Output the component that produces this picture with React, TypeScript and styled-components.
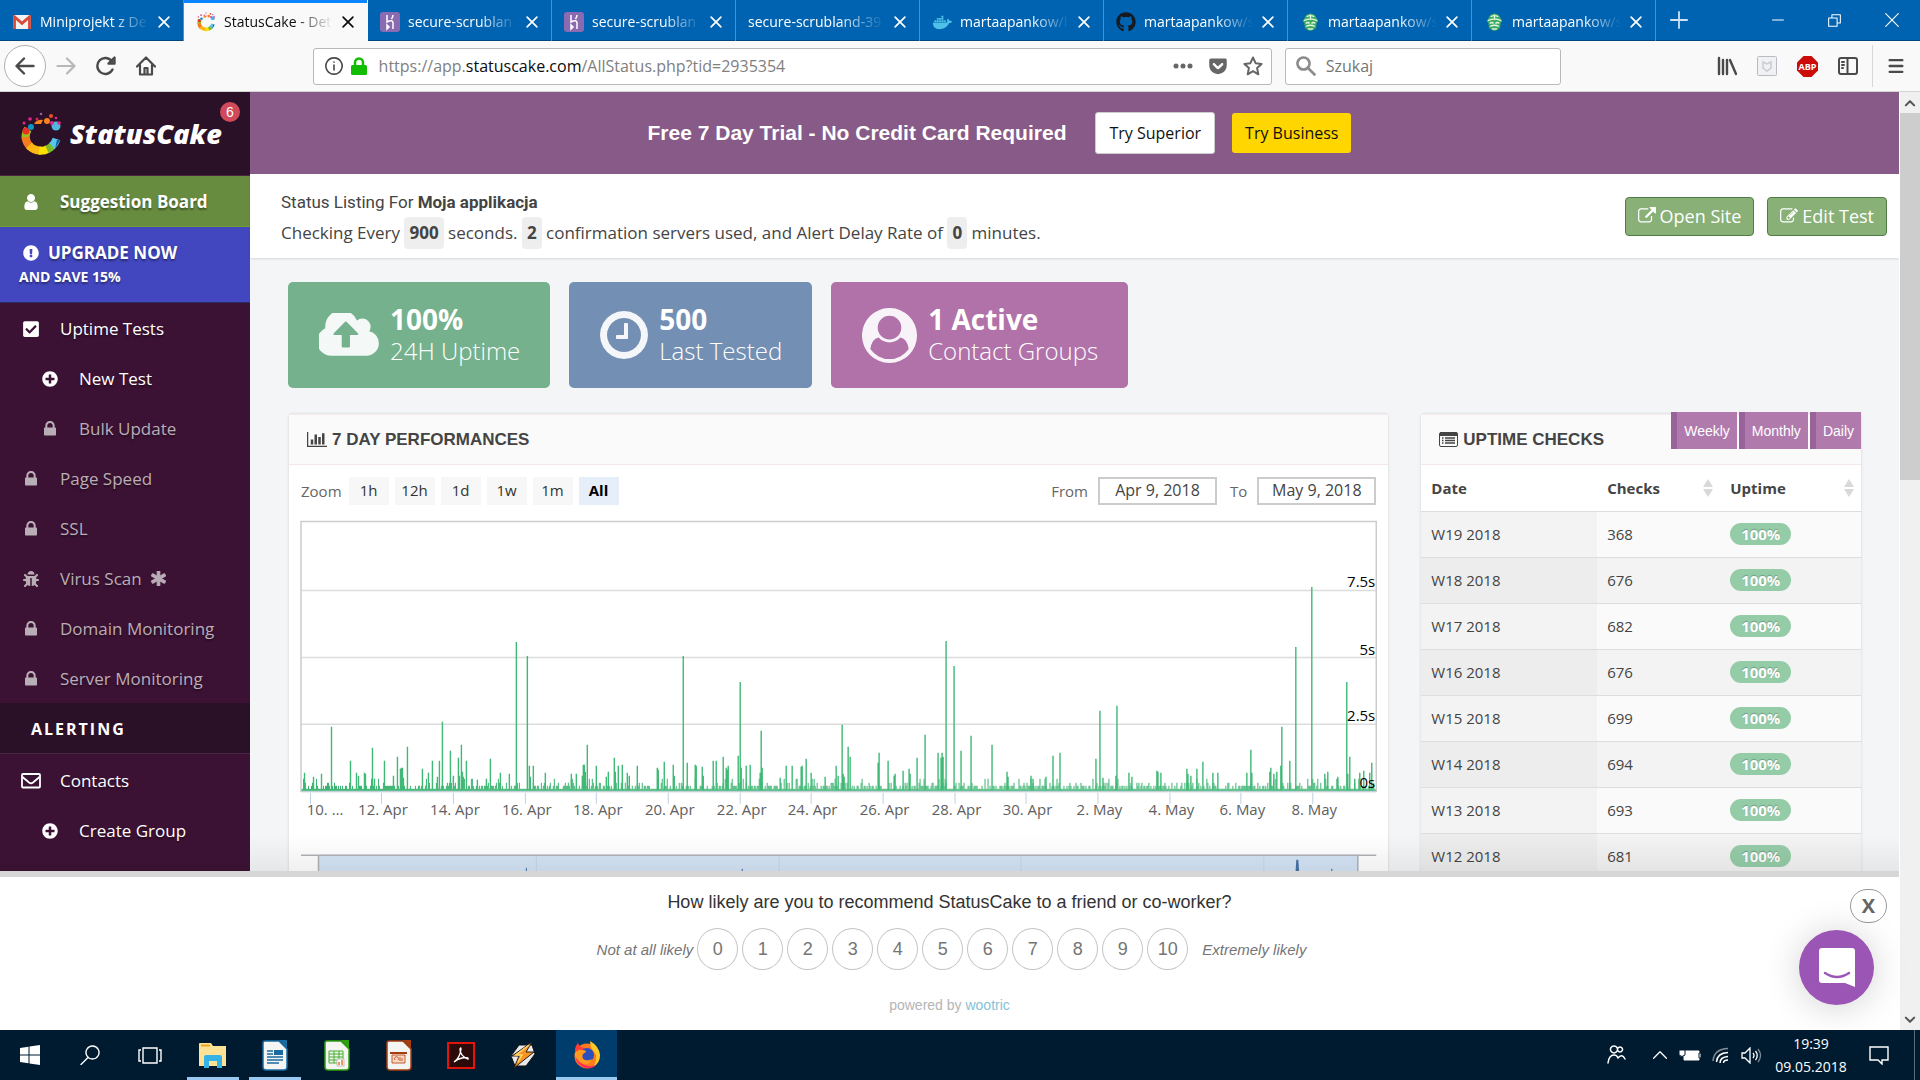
import React from "react";
import styled, { createGlobalStyle, css } from "styled-components";
import {
  FaAsterisk,
  FaBug,
  FaCheckSquare,
  FaDocker,
  FaExclamationCircle,
  FaGetPocket,
  FaGithub,
  FaPlusCircle,
} from "react-icons/fa";

const sans = `"Open Sans", "Noto Sans", sans-serif`;
const arial = `"Liberation Sans", Arial, sans-serif`;

const GlobalStyle = createGlobalStyle`
  * { box-sizing: border-box; }
  body { margin: 0; font-family: ${sans}; font-size: 16px; color: #444; background: #fff; }
  button, input { font: inherit; color: inherit; margin: 0; }
  button { cursor: pointer; background: none; border: 0; padding: 0; }
  a { color: inherit; text-decoration: none; }
  svg { display: block; flex: none; }
`;

/* ---------- shell ---------- */

const Screen = styled.div`
  display: flex;
  flex-direction: column;
  height: 100vh;
  overflow: hidden;
`;

const Viewport = styled.div`
  display: flex;
  flex: 1;
  min-height: 0;
`;

const Site = styled.div`
  display: flex;
  flex-direction: column;
  flex: 1;
  min-width: 0;
`;

const SiteBody = styled.div`
  position: relative;
  display: flex;
  flex: 1;
  min-height: 0;
  overflow: hidden;
  background: #f4f5f7;

  &::after {
    content: "";
    position: absolute;
    left: 0;
    right: 0;
    bottom: 0;
    height: 36px;
    background: linear-gradient(rgba(0, 0, 0, 0), rgba(0, 0, 0, 0.06));
    pointer-events: none;
  }
`;

/* ---------- browser tabs ---------- */

const TabStrip = styled.div`
  display: flex;
  height: 41px;
  background: #0063b1;
  border-bottom: 1px solid #004680;
`;

const TabBox = styled.div<{ $active?: boolean }>`
  display: flex;
  align-items: center;
  flex: 0 1 184px;
  min-width: 0;
  height: 41px;
  padding: 3px 12px 0;
  gap: 8px;
  color: #fff;
  border-right: 1px solid #4b92ca;
  ${(p) =>
    p.$active &&
    css`
      background: #f9f9fa;
      color: #0c0c0d;
      border-right-color: #f9f9fa;
      box-shadow: inset 0 3px #0a84ff;
    `}
`;

const Favicon = styled.span`
  display: flex;
  flex: none;
  justify-content: center;
  width: 20px;
`;

const TabTitle = styled.button`
  flex: 1;
  min-width: 0;
  white-space: nowrap;
  text-align: left;
  font-size: 14px;
  line-height: 20px;
  mask-image: linear-gradient(to right, #000 65%, transparent 100%);
`;

const IconButton = styled.button`
  display: flex;
  align-items: center;
  justify-content: center;
`;

const WindowButtons = styled.div`
  display: flex;
  margin-left: auto;
  color: #fff;
`;

const WindowButton = styled(IconButton)`
  width: 57px;
  height: 40px;
`;

const NewTab = styled(IconButton)`
  width: 45px;
  color: #cfe3f4;
`;

const Toolbar = styled.div`
  display: flex;
  align-items: center;
  height: 51px;
  padding: 0 15px 0 4px;
  background: #f9f9fa;
  border-bottom: 1px solid #d5d5d6;
  color: #4a4a4b;
`;

const NavButtons = styled.div`
  display: flex;
  align-items: center;
`;

const NavButton = styled(IconButton)<{ $faded?: boolean }>`
  width: 40px;
  height: 42px;
  color: ${(p) => (p.$faded ? "#b8b8b9" : "#4a4a4b")};
`;

const BackButton = styled(IconButton)`
  width: 42px;
  height: 42px;
  border: 1px solid #b1b1b3;
  border-radius: 50%;
  background: #fff;
`;

const Spring = styled.div<{ $grow: number }>`
  flex: ${(p) => p.$grow};
`;

const FieldBox = styled.div`
  display: flex;
  align-items: center;
  gap: 8px;
  height: 37px;
  padding: 0 8px 0 11px;
  background: #fff;
  border: 1px solid #b9b9ba;
  border-radius: 3px;
`;

const UrlBox = styled(FieldBox)`
  flex: 96;
  min-width: 0;
`;

const UrlText = styled.div`
  flex: 1;
  min-width: 0;
  margin-left: 4px;
  overflow: hidden;
  white-space: nowrap;
  font-size: 16px;
  color: #808081;
  outline: 0;

  b {
    font-weight: 400;
    color: #0c0c0d;
  }
`;

const UrlActions = styled.div`
  display: flex;
  align-items: center;
  gap: 15px;
  color: #666;
`;

const SearchBox = styled.label`
  display: flex;
  align-items: center;
  gap: 8px;
  width: 276px;
  height: 37px;
  margin-left: 13px;
  padding: 0 10px;
  background: #fff;
  border: 1px solid #b9b9ba;
  border-radius: 3px;
  color: #8c8c8c;
`;

const SearchInput = styled.input`
  flex: 1;
  min-width: 0;
  border: 0;
  outline: 0;
  background: none;
  font-size: 16px;

  &::placeholder {
    color: #757575;
    opacity: 1;
  }
`;

const Extensions = styled.div`
  display: flex;
  align-items: center;
  gap: 20px;
`;

const MenuDivider = styled.div`
  width: 1px;
  height: 42px;
  margin: 0 -6px;
  background: #d7d7d8;
`;

/* ---------- page scrollbar ---------- */

const Scroll = styled.div`
  display: flex;
  flex-direction: column;
  align-items: center;
  justify-content: space-between;
  width: 21px;
  background: #f0f0f0;
  border-left: 1px solid #fff;
  color: #555;
`;

const ScrollArrow = styled(IconButton)`
  width: 20px;
  height: 21px;
`;

const ScrollTrack = styled.div`
  flex: 1;
  width: 20px;
`;

const ScrollThumb = styled.div`
  height: 41%;
  background: #cdcdcd;
`;

/* ---------- sidebar ---------- */

const Sidebar = styled.nav`
  flex: 0 0 250px;
  display: flex;
  flex-direction: column;
  background: #3c1234;
  color: #fff;
`;

const Brand = styled.a`
  position: relative;
  display: flex;
  align-items: center;
  flex: none;
  gap: 9px;
  height: 84px;
  padding-left: 21px;
  background: #2b1127;
  border-bottom: 1px solid #4a2644;
`;

const BrandName = styled.span`
  font-size: 27px;
  font-style: italic;
  font-weight: 800;
  line-height: 36px;
`;

const Badge = styled.span`
  position: absolute;
  top: 10px;
  right: 10px;
  width: 20px;
  height: 20px;
  border-radius: 50%;
  background: #d04a5b;
  font-family: ${arial};
  font-size: 14px;
  line-height: 20px;
  text-align: center;
`;

const SideLink = styled.a<{ $sub?: boolean; $muted?: boolean; $green?: boolean }>`
  display: flex;
  align-items: center;
  flex: none;
  height: 50px;
  padding-top: 1px;
  padding-left: ${(p) => (p.$sub ? 37 : 18)}px;
  font-size: 17px;
  color: ${(p) => (p.$muted ? "#b9adb6" : "#fff")};
  text-shadow: 0 2px 2px rgba(0, 0, 0, 0.4);
  ${(p) =>
    p.$green &&
    css`
      height: 51px;
      background: #688c3f;
      border-bottom: 1px solid #6fa035;
      font-weight: 700;
    `}
`;

const SideIcon = styled.span`
  display: flex;
  justify-content: center;
  width: 26px;
  margin-right: 16px;
`;

const SideMark = styled.span`
  margin-left: 9px;

  svg {
    stroke: currentColor;
    stroke-width: 40px;
  }
`;

const Upgrade = styled.a`
  flex: none;
  height: 76px;
  padding: 14px 19px 0;
  background: #4347bf;
  border-bottom: 1px solid #2c2b63;
  font-weight: 700;
  text-shadow: 0 2px 2px rgba(0, 0, 0, 0.4);
`;

const UpgradeTop = styled.span`
  display: flex;
  align-items: center;
  gap: 9px;
  padding-left: 4px;
  font-size: 17px;
  line-height: 24px;
`;

const UpgradeNote = styled.span`
  display: block;
  font-size: 14px;
  line-height: 23px;
`;

const SideHeading = styled.h2`
  flex: none;
  margin: 0 0 1px;
  padding-left: 31px;
  height: 51px;
  background: #2b1127;
  border-bottom: 1px solid #4a2644;
  font-size: 16px;
  font-weight: 700;
  line-height: 52px;
  letter-spacing: 2px;
`;

/* ---------- main column ---------- */

const Main = styled.main`
  flex: 1;
  min-width: 0;
`;

const Trial = styled.div`
  display: flex;
  align-items: center;
  justify-content: center;
  height: 82px;
  padding-right: 150px;
  background: #875a87;
`;

const TrialText = styled.strong`
  margin-right: 29px;
  font-family: ${arial};
  font-size: 21px;
  color: #fff;
`;

const TrialButton = styled.button<{ $gold?: boolean }>`
  height: ${(p) => (p.$gold ? 40 : 42)}px;
  margin-right: ${(p) => (p.$gold ? 0 : 17)}px;
  padding: 0 13px;
  border: ${(p) => (p.$gold ? "0" : "1px solid #ccc")};
  border-radius: 3px;
  background: ${(p) => (p.$gold ? "#ffd600" : "#fff")};
  color: #111;
  font-size: 16px;
`;

const PageHead = styled.header`
  display: flex;
  justify-content: space-between;
  height: 84px;
  padding: 16px 12px 0 31px;
  background: #fff;
  box-shadow: 0 1px 2px rgba(0, 0, 0, 0.12);
`;

const PageTitle = styled.h1`
  margin: 0 0 3px;
  font-family: Roboto, ${sans};
  font-size: 17px;
  font-weight: 400;
  line-height: 24px;
`;

const Summary = styled.p`
  margin: 0;
  font-size: 17px;
  line-height: 32px;

  b {
    display: inline-block;
    padding: 0 5px;
    border-radius: 4px;
    background: #eee;
  }
`;

const HeadActions = styled.div`
  display: flex;
  gap: 13px;
  padding-top: 7px;
`;

const GreenButton = styled.a`
  display: flex;
  align-items: center;
  gap: 4px;
  height: 39px;
  padding: 0 12px 1px;
  border: 1px solid #4f7d43;
  border-radius: 4px;
  background: #88b077;
  color: #fff;
  font-size: 18px;
`;

const Content = styled.div`
  padding: 24px 38px 0 39px;
`;

const Stats = styled.div`
  display: flex;
  gap: 19px;
  margin: 0 0 26px -1px;
`;

const Stat = styled.a<{ $color: string }>`
  display: flex;
  align-items: center;
  gap: 11px;
  height: 106px;
  padding: 0 30px 0 31px;
  border-radius: 5px;
  background: ${(p) => p.$color};
  color: #fff;

  svg {
    opacity: 0.92;
  }
`;

const StatValue = styled.strong`
  display: block;
  font-size: 28px;
  line-height: 32px;
`;

const StatLabel = styled.span`
  display: block;
  font-size: 24px;
  font-weight: 300;
  line-height: 32px;
`;

const Panels = styled.div`
  display: grid;
  grid-template-columns: minmax(0, 5fr) minmax(0, 2fr);
  gap: 33px;
`;

const Panel = styled.section`
  background: #fff;
  border-radius: 3px;
  box-shadow: 0 0 3px rgba(0, 0, 0, 0.15);
`;

const PanelHead = styled.div`
  position: relative;
  display: flex;
  align-items: center;
  gap: 5px;
  height: 51px;
  padding: 0 18px;
  background: #fafafa;
  border-top: 1px solid #f8eaea;
  border-bottom: 1px solid #f5e6e8;
`;

const PanelTitle = styled.h2`
  margin: 0;
  font-family: ${arial};
  font-size: 17px;
  font-weight: 700;
`;

const Periods = styled.div`
  position: absolute;
  top: -3px;
  right: 0;
  display: flex;
  gap: 2px;
`;

const Period = styled.button`
  height: 37px;
  padding: 0 7px;
  border-left: 6px solid #98639a;
  background: #b07aad;
  color: #fff;
  font-family: ${arial};
  font-size: 14px;
`;

const ChartBody = styled.div`
  padding: 12px 11px 0;
`;

const RangeRow = styled.div`
  display: flex;
  align-items: center;
  height: 28px;
  margin-bottom: 15px;
  padding: 0 1px;
  font-size: 15px;
  color: #666;
`;

const RangeButtons = styled.div`
  display: flex;
  gap: 6px;
  margin-left: 7px;
  margin-right: auto;
`;

const RangeButton = styled.button<{ $on?: boolean }>`
  width: 40px;
  height: 28px;
  padding-bottom: 2px;
  background: ${(p) => (p.$on ? "#e6eef9" : "#f7f7f7")};
  color: ${(p) => (p.$on ? "#000" : "#333")};
  font-weight: ${(p) => (p.$on ? 700 : 400)};
  font-size: 15px;
`;

const DateField = styled.label`
  display: flex;
  align-items: center;
  gap: 10px;
  margin-left: 13px;
`;

const DateInput = styled.input`
  width: 119px;
  height: 28px;
  padding: 0 0 2px;
  border: 2px solid #ccc;
  background: #fff;
  color: #444;
  text-align: center;
  font-size: 16px;
`;

const ChartSvg = styled.svg`
  width: 100%;
  height: auto;
  font-family: ${sans};
  font-size: 15px;
`;

/* ---------- checks table ---------- */

const ChecksTable = styled.table`
  width: 100%;
  border-collapse: collapse;
  table-layout: fixed;
  font-size: 15px;

  th,
  td {
    height: 46px;
    padding: 0 10px;
    text-align: left;
    border-bottom: 1px solid #ddd;
  }

  th:first-child { width: 40%; }
  th:nth-child(2) { width: 28%; }

  tbody tr { background: #fafafa; }
  tbody td:first-child { background: #f3f3f3; }
  tbody tr:nth-child(even) { background: #f3f3f3; }
  tbody tr:nth-child(even) td:first-child { background: #ededed; }
`;

const SortHead = styled.span`
  display: flex;
  align-items: center;
  justify-content: space-between;
  margin-right: -3px;
`;

const Pill = styled.span`
  display: block;
  width: 61px;
  height: 22px;
  border-radius: 11px;
  background: #95cca8;
  color: #fff;
  font-size: 15px;
  font-weight: 700;
  line-height: 22px;
  text-align: center;
  text-shadow: 0 -1px 1px rgba(0, 0, 0, 0.25);
`;

/* ---------- survey ---------- */

const Survey = styled.aside`
  position: relative;
  flex: none;
  display: flex;
  flex-direction: column;
  align-items: center;
  height: 159px;
  padding-top: 14px;
  border-top: 6px solid #d6d6d6;
  background: #fff;
  font-family: ${arial};
`;

const Question = styled.p`
  margin: 0 0 15px;
  font-size: 18px;
  line-height: 22px;
  color: #333;
`;

const Scores = styled.div`
  display: flex;
  align-items: center;
  gap: 4px;
  padding-left: 4px;
  font-size: 15px;
  font-style: italic;
  color: #757575;
`;

const ScoreEnd = styled.span`
  margin-left: 10px;
`;

const Score = styled.button`
  width: 41px;
  height: 42px;
  border: 1px solid #c4c4c4;
  border-radius: 50%;
  background: #fff;
  font-size: 18px;
  font-style: normal;
`;

const Powered = styled.p`
  margin: 26px 0 0;
  font-size: 14px;
  line-height: 18px;
  color: #b5b5b5;

  a {
    color: #86c2d6;
  }
`;

const CloseSurvey = styled.button`
  position: absolute;
  top: 12px;
  right: 12px;
  width: 37px;
  height: 34px;
  border: 1px solid #999;
  border-radius: 17px;
  background: #fff;
  color: #666;
  font-family: ${sans};
  font-size: 20px;
  font-weight: 700;
  line-height: 26px;
`;

const ChatButton = styled(IconButton)`
  position: absolute;
  right: 25px;
  bottom: 25px;
  width: 75px;
  height: 75px;
  border-radius: 50%;
  background: #9b55b5;
  box-shadow: 0 2px 36px rgba(0, 0, 0, 0.18);
`;

/* ---------- taskbar ---------- */

const TaskBar = styled.footer`
  display: flex;
  flex: none;
  height: 50px;
  background: #001b30;
  color: #fff;
`;

const TaskButton = styled(IconButton)<{ $open?: boolean; $active?: boolean }>`
  width: ${(p) => (p.$active ? 61 : 52)}px;
  background: ${(p) => (p.$active ? "#003d6d" : "none")};
  box-shadow: ${(p) => (p.$open || p.$active ? "inset 0 -3px #99c8f0" : "none")};
`;

const TaskStart = styled.div`
  display: flex;
  gap: 8px;
  padding: 0 11px 0 4px;
`;

const TaskApps = styled.div`
  display: flex;
  gap: 10px;
  margin-right: 7px;
`;

const Tray = styled.div`
  display: flex;
  align-items: center;
  margin-left: auto;
`;

const TrayIcons = styled.div`
  display: flex;
  align-items: center;
  gap: 11px;
`;

const People = styled.span`
  margin-right: 15px;
`;

const Clock = styled.time`
  width: 98px;
  margin-right: 9px;
  font-size: 14px;
  line-height: 23px;
  text-align: center;
`;

const ShowDesktop = styled.button`
  width: 6px;
  height: 50px;
  margin-left: 25px;
  border-left: 1px solid #5b6b78;
`;

/* ---------- icons ---------- */

type GlyphProps = { d: string; box?: string; w: number; h: number };
const Glyph = ({ d, box = "0 0 1792 1792", w, h }: GlyphProps) => (
  <svg width={w} height={h} viewBox={box} fill="currentColor" aria-hidden="true">
    <path d={d} />
  </svg>
);

type LineProps = { d: string; size?: number; w?: number; fill?: string };
const Line = ({ d, size = 20, w = 2, fill = "none" }: LineProps) => (
  <svg width={size} height={size} viewBox="0 0 20 20" fill={fill} stroke="currentColor" strokeWidth={w} strokeLinejoin="round" strokeLinecap="round" aria-hidden="true">
    <path d={d} />
  </svg>
);

const PERSON =
  "M1280 1399q0 109-62.5 187t-150.5 78h-854q-88 0-150.5-78t-62.5-187q0-85 8.5-160.5t31.5-152 58.5-131 94-89 134.5-34.5q131 128 313 128t313-128q76 0 134.5 34.5t94 89 58.5 131 31.5 152 8.5 160.5zm-256-887q0 159-112.5 271.5t-271.5 112.5-271.5-112.5-112.5-271.5 112.5-271.5 271.5-112.5 271.5 112.5 112.5 271.5z";
const PERSON_DISC =
  "M1523 1339q-22-155-87.500-257.500t-184.500-118.500q-67 74-159.500 115.500t-195.500 41.500-195.500-41.500-159.500-115.500q-119 16-184.500 118.500t-87.500 257.500q106 150 271 237.500t356 87.500 356-87.500 271-237.500zm-243-699q0-159-112.500-271.500t-271.500-112.500-271.500 112.500-112.500 271.500 112.500 271.500 271.500 112.500 271.500-112.500 112.500-271.500zm512 256q0 182-71 347.500t-190.500 286-285.500 191.500-349 71-348.500-71-286-191-191-286-71-348.500 71-348 191-286 286-191 348-71 348 71 286 191 191 286 71 348z";
const LOCK =
  "M320 768h512v-192q0-106-75-181t-181-75-181 75-75 181v192zm832 96v576q0 40-28 68t-68 28h-960q-40 0-68-28t-28-68v-576q0-40 28-68t68-28h32v-192q0-184 132-316t316-132 316 132 132 316v192h32q40 0 68 28t28 68z";
const CLOUD =
  "M1216 864q0-14-9-23l-352-352q-9-9-23-9t-23 9l-351 351q-10 12-10 24 0 14 9 23t23 9h224v352q0 13 9.5 22.5t22.5 9.5h192q13 0 22.5-9.5t9.5-22.5v-352h224q13 0 22.5-9.5t9.5-22.5zm640 288q0 159-112.5 271.5t-271.5 112.5h-1088q-185 0-316.5-131.5t-131.5-316.5q0-130 70-240t188-165q-2-30-2-43 0-212 150-362t362-150q156 0 285.5 87t188.5 231q71-62 166-62 106 0 181 75t75 181q0 76-41 138 130 31 213.5 135.5t83.5 238.5z";
const CLOCK =
  "M1024 544v448q0 14-9 23t-23 9h-320q-14 0-23-9t-9-23v-64q0-14 9-23t23-9h224v-352q0-14 9-23t23-9h64q14 0 23 9t9 23zm416 352q0-148-73-273t-198-198-273-73-273 73-198 198-73 273 73 273 198 198 273 73 273-73 198-198 73-273zm224 0q0 209-103 385.5t-279.5 279.5-385.5 103-385.5-103-279.5-279.5-103-385.5 103-385.5 279.5-279.5 385.5-103 385.5 103 279.5 279.5 103 385.5z";
const BARS =
  "M640 896v512h-256v-512h256zm384-512v1024h-256v-1024h256zm1024 1152v128h-2048v-1536h128v1408h1920zm-640-896v768h-256v-768h256zm384-384v1152h-256v-1152h256z";
const EXTERNAL =
  "M1408 928v320q0 119-84.5 203.5t-203.5 84.5h-832q-119 0-203.5-84.5t-84.5-203.5v-832q0-119 84.5-203.5t203.5-84.5h704q14 0 23 9t9 23v64q0 14-9 23t-23 9h-704q-66 0-113 47t-47 113v832q0 66 47 113t113 47h832q66 0 113-47t47-113v-320q0-14 9-23t23-9h64q14 0 23 9t9 23zm384-864v512q0 26-19 45t-45 19-45-19l-176-176-652 652q-10 10-23 10t-23-10l-114-114q-10-10-10-23t10-23l652-652-176-176q-19-19-19-45t19-45 45-19h512q26 0 45 19t19 45z";
const EDIT =
  "M888 1184l116-116-152-152-116 116v56h96v96h56zm440-720q-16-16-33 1l-350 350q-17 17-1 33t33-1l350-350q17-17 1-33zm80 594v190q0 119-84.5 203.5t-203.5 84.5h-832q-119 0-203.5-84.5t-84.5-203.5v-832q0-119 84.5-203.5t203.5-84.5h832q63 0 117 25 15 7 18 23 3 17-9 29l-49 49q-14 14-32 8-23-6-45-6h-832q-66 0-113 47t-47 113v832q0 66 47 113t113 47h832q66 0 113-47t47-113v-126q0-13 9-22l64-64q15-15 35-7t20 29zm-96-738l288 288-672 672h-288v-288zm444 132l-92 92-288-288 92-92q28-28 68-28t68 28l152 152q28 28 28 68t-28 68z";

const LockIcon = () => <Glyph d={LOCK} box="0 160 1152 1400" w={12} h={15} />;

const MailIcon = () => (
  <svg width="20" height="16" viewBox="0 0 20 16" fill="none" stroke="currentColor" strokeWidth="1.800" aria-hidden="true">
    <rect x="1" y="1" width="18" height="13.500" rx="1" />
    <path d="M1.500 4l6.500 5.500q2 1.500 4 0L18.500 4" />
  </svg>
);

const ListIcon = () => (
  <svg width="19" height="15" viewBox="0 0 19 15" aria-hidden="true">
    <rect x=".5" y=".5" width="18" height="14" rx="1.500" fill="none" stroke="#444" />
    <path d="M1 0h17v4H1z" fill="#444" />
    <path d="M3 6h1.500M3 8.500h1.500M3 11h1.500M6 6h10M6 8.500h10M6 11h10" stroke="#444" strokeWidth="1.400" />
  </svg>
);

const CakeLogo = ({ size }: { size: number }) => (
  <svg width={size} height={size * 1.1} viewBox="0 0 40 44" aria-hidden="true">
    <path d="M7 17a15.500 15.500 0 0 0-2.500 9" fill="none" stroke="#97c11f" strokeWidth="8" />
    <path d="M4.500 25a15.500 15.500 0 0 0 5 10" fill="none" stroke="#f47b20" strokeWidth="8" />
    <path d="M8 33.500a15.500 15.500 0 0 0 12 5" fill="none" stroke="#fdb813" strokeWidth="8" />
    <path d="M18 38.700a15.500 15.500 0 0 0 9-1.700" fill="none" stroke="#ffe100" strokeWidth="8" />
    <path d="M26 37.500a15.500 15.500 0 0 0 6-4.500" fill="none" stroke="#7db928" strokeWidth="8" />
    <path d="M31 34a15.500 15.500 0 0 0 4.500-7" fill="none" stroke="#5bc5e8" strokeWidth="8" />
    <path d="M39 28l-5 9 2-9z" fill="#0d5ca8" />
    <circle cx="5" cy="19" r="3.500" fill="#ee2d24" />
    <circle cx="10" cy="15" r="3" fill="#0b96c8" />
    <path d="M13 12q3-5 9-4l-2 4z" fill="#f58220" />
    <circle cx="26" cy="9" r="3" fill="#f58220" />
    <circle cx="35" cy="14" r="4.500" fill="#4fb8dc" />
    <circle cx="31" cy="11" r="2" fill="#e5278b" />
    <circle cx="38" cy="11" r="1.800" fill="#e5278b" />
    <circle cx="30" cy="4" r="2" fill="#f04e23" />
    <circle cx="35" cy="6" r="1.300" fill="#e5278b" />
    <circle cx="20" cy="2" r="1.300" fill="#8d62a8" />
    <circle cx="16" cy="7" r="1.500" fill="#d6245f" />
    <circle cx="9" cy="7" r="1.800" fill="#e5278b" />
    <circle cx="3" cy="11" r="1.500" fill="#e5278b" />
  </svg>
);

const GmailIcon = () => (
  <svg width="18" height="14" viewBox="0 0 19 15" aria-hidden="true">
    <rect width="19" height="15" rx="1.500" fill="#f2f2f2" />
    <path d="M1.500 15V2l8 7 8-7v13" fill="none" stroke="#d84a3a" strokeWidth="3" />
  </svg>
);

const HerokuIcon = () => (
  <svg width="20" height="20" viewBox="0 0 20 20" aria-hidden="true">
    <rect width="20" height="20" rx="3" fill="#8a6bb1" />
    <path d="M7 3v7q6-3 6 1v6M7 13v4l2-2zM13 3q0 2-1.500 4" fill="none" stroke="#fff" strokeWidth="1.500" />
  </svg>
);

const TravisIcon = () => (
  <svg width="17" height="19" viewBox="0 0 18 19" aria-hidden="true">
    <path d="M4 2q5-4 10 0l2 4 1.500 2-2 2-.5 5q-6 7-12 0l-.5-5-2-2L2 6z" fill="#3fab5e" />
    <path d="M5 3.500q4-2.500 8 0M2 7.500q7-3 14 0" fill="none" stroke="#e3f5e6" strokeWidth="1.300" />
    <path d="M4 10.500q2-2 4 0M10 10.500q2-2 4 0M4.500 13.500q4.500-2 9 0M6.500 16q2.500 1 5 0" fill="none" stroke="#e3f5e6" strokeWidth="1.500" />
    <path d="M9 1v5" stroke="#e3f5e6" strokeWidth="1.300" />
  </svg>
);

/* ---------- data ---------- */

const tabs: { title: string; icon?: React.ReactNode; active?: boolean }[] = [
  { title: "Miniprojekt z De", icon: <GmailIcon /> },
  { title: "StatusCake - Det", icon: <CakeLogo size={18} />, active: true },
  { title: "secure-scrublan", icon: <HerokuIcon /> },
  { title: "secure-scrublan", icon: <HerokuIcon /> },
  { title: "secure-scrubland-39" },
  { title: "martaapankow/h", icon: <FaDocker size={19} color="#4fc0e8" /> },
  { title: "martaapankow/s", icon: <FaGithub size={20} color="#161b22" /> },
  { title: "martaapankow/s", icon: <TravisIcon /> },
  { title: "martaapankow/s", icon: <TravisIcon /> },
];

type Item = { label: string; icon: React.ReactNode; sub?: boolean; muted?: boolean; mark?: boolean };
const tests: Item[] = [
  { label: "Uptime Tests", icon: <FaCheckSquare size={18} /> },
  { label: "New Test", icon: <FaPlusCircle size={16} />, sub: true },
  { label: "Bulk Update", icon: <LockIcon />, sub: true, muted: true },
  { label: "Page Speed", icon: <LockIcon />, muted: true },
  { label: "SSL", icon: <LockIcon />, muted: true },
  { label: "Virus Scan", icon: <FaBug size={16} />, muted: true, mark: true },
  { label: "Domain Monitoring", icon: <LockIcon />, muted: true },
  { label: "Server Monitoring", icon: <LockIcon />, muted: true },
];
const alerting: Item[] = [
  { label: "Contacts", icon: <MailIcon /> },
  { label: "Create Group", icon: <FaPlusCircle size={16} />, sub: true },
];

const weeks: [string, number][] = [
  ["W19 2018", 368],
  ["W18 2018", 676],
  ["W17 2018", 682],
  ["W16 2018", 676],
  ["W15 2018", 699],
  ["W14 2018", 694],
  ["W13 2018", 693],
  ["W12 2018", 681],
];

const peaks = [
  4, 18, 13, 14, 21, 17, 31, 64, 50, 30, 56, 18, 58, 15, 64, 18, 65, 17, 72, 43, 74, 12, 84, 30, 93, 15, 97, 34, 100, 22,
  101, 23, 102, 23, 103, 13, 107, 44, 122, 22, 128, 18, 132, 30, 137, 14, 139, 30, 142, 69, 150, 40, 153, 15, 158, 33,
  159, 15, 161, 46, 162, 19, 163, 14, 166, 30, 177, 11, 186, 12, 190, 32, 200, 18, 209, 17, 216, 149, 227, 135, 229, 25,
  230, 14, 233, 25, 245, 18, 271, 17, 276, 17, 282, 15, 283, 26, 284, 26, 285, 19, 287, 46, 296, 25, 306, 14, 308, 19,
  314, 33, 315, 19, 318, 25, 322, 26, 327, 18, 329, 15, 337, 25, 357, 23, 358, 21, 364, 29, 373, 26, 374, 15, 383, 135,
  387, 28, 395, 26, 396, 25, 402, 24, 403, 15, 413, 30, 416, 30, 423, 34, 426, 23, 427, 21, 428, 25, 438, 35, 440, 109,
  441, 23, 446, 25, 450, 26, 460, 18, 461, 60, 462, 23, 480, 13, 486, 25, 492, 25, 501, 24, 502, 25, 506, 32, 511, 18,
  525, 14, 536, 25, 538, 15, 542, 66, 543, 17, 544, 14, 548, 44, 550, 34, 578, 28, 579, 38, 588, 30, 594, 15, 595, 17,
  603, 20, 609, 22, 610, 17, 617, 33, 625, 56, 638, 38, 641, 33, 642, 38, 643, 34, 646, 150, 654, 125, 661, 40, 671, 55,
  692, 46, 707, 19, 708, 14, 731, 15, 733, 12, 746, 14, 753, 35, 760, 38, 796, 32, 800, 80, 803, 13, 816, 15, 817, 85,
  829, 18, 832, 14, 857, 20, 858, 19, 861, 18, 887, 22, 888, 17, 891, 15, 897, 22, 903, 29, 913, 18, 918, 18, 947, 18,
  951, 41, 952, 18, 970, 19, 971, 23, 974, 17, 977, 19, 981, 25, 982, 64, 990, 30, 996, 144, 1012, 204, 1025, 17,
  1028, 19, 1038, 14, 1047, 109, 1048, 17, 1050, 34, 1055, 12, 1060, 18, 1064, 20, 1070, 18, 1072, 28,
];

const ticks: [number, string][] = [
  [81, "12. Apr"], [153, "14. Apr"], [225, "16. Apr"], [296, "18. Apr"], [368, "20. Apr"], [440, "22. Apr"],
  [511, "24. Apr"], [583, "26. Apr"], [655, "28. Apr"], [726, "30. Apr"], [798, "2. May"], [870, "4. May"],
  [941, "6. May"], [1013, "8. May"],
];

const BASE = 271;

/* low readings between the peaks, from a fixed seed so that every render agrees */
const lowReadings = (() => {
  let seed = 41;
  let path = "";
  for (let x = 2; x < 1076; x += 1) {
    seed = (seed * 1103515245 + 12345) % 2147483648;
    const r = seed / 2147483648;
    const h = r > 0.95 ? 12 : r > 0.84 ? 8 : r > 0.5 ? 5 : 2;
    path += `M${x}.5 ${BASE}v-${h}`;
  }
  return path;
})();

const peakPath = (() => {
  let path = "";
  for (let i = 0; i < peaks.length; i += 2) path += `M${peaks[i]}.5 ${BASE}v-${peaks[i + 1]}`;
  return path;
})();

const Chart = () => (
  <ChartSvg viewBox="0 0 1078 400" role="img" aria-label="Response time by day">
    <path d="M1 70.500h1076M1 137.500h1076M1 204.500h1076" stroke="#dcdcdc" strokeWidth="1.500" />
    <rect x="1" y="1.500" width="1076" height="270" fill="none" stroke="#ccc" strokeWidth="1.500" />
    <path d={lowReadings} stroke="#3cb371" />
    <path d={peakPath} stroke="#3fb975" strokeWidth="1.400" />
    <path d="M1 270.500h1076" stroke="#5cc48b" />
    <path d="M1 272h1076" stroke="#c0d0e0" />
    <g fill="#000" textAnchor="end">
      <text x="1076" y="67">7.5s</text>
      <text x="1076" y="135">5s</text>
      <text x="1076" y="201">2.5s</text>
      <text x="1076" y="268">0s</text>
    </g>
    <path d={[10, ...ticks.map((t) => t[0])].map((x) => `M${x}.5 273v11`).join("")} stroke="#c0d0e0" />
    <g fill="#606060" textAnchor="middle">
      <text x="25" y="295">10. …</text>
      {ticks.map(([x, label]) => (
        <text key={label} x={x + 2} y="295">
          {label}
        </text>
      ))}
    </g>
    <rect x="18" y="335" width="1041" height="65" fill="#d4e4f6" />
    <path d="M236.500 335v65M479.500 335v65M721.500 335v65M964.500 335v65" stroke="#c6d6e9" />
    <path d="M1 335.500h1076M18.500 335v65M1058.500 335v65" stroke="#b2b1b6" strokeWidth="1.500" fill="none" />
    <path d="M225 400l1-52h1l1 52zM441 400l1-51h1l1 51zM993 400l4-60h2l4 60zM1030 400l2-51h1l2 51z" fill="#4572a7" />
  </ChartSvg>
);

const SortArrows = () => (
  <svg width="10" height="18" viewBox="0 0 10 18" fill="#d9d9d9" aria-hidden="true">
    <path d="M5 0l5 8H0zM5 18l5-8H0z" />
  </svg>
);

const SideEntry = ({ item }: { item: Item }) => (
  <SideLink href="#" $sub={item.sub} $muted={item.muted}>
    <SideIcon>{item.icon}</SideIcon>
    {item.label}
    {item.mark && (
      <SideMark>
        <FaAsterisk size={15} />
      </SideMark>
    )}
  </SideLink>
);

/* ---------- taskbar drawings ---------- */

const DocIcon = ({ color, children }: { color: string; children: React.ReactNode }) => (
  <svg width="26" height="31" viewBox="0 0 26 31" aria-hidden="true">
    <path d="M3 1h14l8 8v18q0 3-3 3H4q-3 0-3-3V3q0-2 2-2z" fill="#f4f4f2" stroke={color} strokeWidth="1.500" />
    <path d="M17 0h8v9z" fill={color} />
    {children}
  </svg>
);

export default function App() {
  return (
    <>
      <GlobalStyle />
      <Screen>
        <TabStrip>
          {tabs.map((t, i) => (
            <TabBox key={i} $active={t.active}>
              {t.icon && <Favicon>{t.icon}</Favicon>}
              <TabTitle>{t.title}</TabTitle>
              <IconButton aria-label="Close tab">
                <Line d="M3 3l14 14M17 3L3 17" size={14} w={2.4} />
              </IconButton>
            </TabBox>
          ))}
          <NewTab aria-label="New tab">
            <Line d="M10 1v18M1 10h18" size={18} />
          </NewTab>
          <WindowButtons>
            <WindowButton aria-label="Minimize">
              <Line d="M1 10h18" size={12} w={1.7} />
            </WindowButton>
            <WindowButton aria-label="Restore">
              <Line d="M1 6h13v13H1zM6 6V1h13v13h-5" size={13} w={1.6} />
            </WindowButton>
            <WindowButton aria-label="Close">
              <Line d="M1 1l18 18M19 1L1 19" size={14} w={1.6} />
            </WindowButton>
          </WindowButtons>
        </TabStrip>

        <Toolbar>
          <NavButtons>
            <BackButton aria-label="Back">
              <Line d="M18.500 10H2M9 2.500L1.500 10 9 17.500" w={2.4} />
            </BackButton>
            <NavButton aria-label="Forward" $faded>
              <Line d="M1.500 10H18M11 2.500l7.500 7.500-7.500 7.500" w={2.2} />
            </NavButton>
            <NavButton aria-label="Reload">
              <Line d="M16.500 13.500A8 8 0 1 1 16 5.500M18.500 1.500v6h-6z" w={2.4} />
            </NavButton>
            <NavButton aria-label="Home">
              <Line d="M1 10.500L10 1.500l9 9M4 9v9.500h12V9M8.500 18v-6h3v6" w={2.2} />
            </NavButton>
          </NavButtons>
          <Spring $grow={15} />
          <UrlBox>
            <Line d="M10 1a9 9 0 1 0 .01 0zM10 9v5.500M10 5.500v.3" size={18} w={1.8} />
            <svg width="16" height="18" viewBox="0 0 16 18" aria-hidden="true">
              <path d="M4 9V5.500a4 4 0 0 1 8 0V9" fill="none" stroke="#12bc00" strokeWidth="2.500" />
              <rect y="8" width="16" height="10" rx="1.500" fill="#12bc00" />
            </svg>
            <UrlText role="textbox" aria-label="Address" contentEditable suppressContentEditableWarning spellCheck={false}>
              https://app.<b>statuscake.com</b>/AllStatus.php?tid=2935354
            </UrlText>
            <UrlActions>
              <IconButton aria-label="Page actions">
                <svg width="20" height="6" viewBox="0 0 20 6" fill="currentColor">
                  <circle cx="3" cy="3" r="2.500" />
                  <circle cx="10" cy="3" r="2.500" />
                  <circle cx="17" cy="3" r="2.500" />
                </svg>
              </IconButton>
              <IconButton aria-label="Save to Pocket">
                <FaGetPocket size={20} />
              </IconButton>
              <IconButton aria-label="Bookmark">
                <Line d="M10 1.500l2.600 5.700 6 .7-4.500 4.200 1.200 6.200L10 15.200l-5.300 3.100 1.200-6.200L1.400 7.900l6-.7z" w={2} />
              </IconButton>
            </UrlActions>
          </UrlBox>
          <SearchBox>
            <Line d="M7.500 1.500a6 6 0 1 0 .01 0zM12 12l6.500 6.500" w={2.6} />
            <SearchInput placeholder="Szukaj" aria-label="Szukaj" />
          </SearchBox>
          <Spring $grow={16} />
          <Extensions>
            <IconButton aria-label="Library">
              <Line d="M2 2v16M6 4v14M10 4v14M13 4l6 14" w={2.4} />
            </IconButton>
            <IconButton aria-label="WebAdvisor">
              <svg width="20" height="20" viewBox="0 0 20 20">
                <rect x=".5" y=".5" width="19" height="19" rx="1" fill="#f0f1f3" stroke="#b9bcc2" />
                <path d="M6 6l4 2 4-2v6l-4 3-4-3z" fill="none" stroke="#c9ccd1" strokeWidth="1.500" />
              </svg>
            </IconButton>
            <IconButton aria-label="Adblock Plus">
              <svg width="21" height="21" viewBox="0 0 21 21">
                <path d="M6.500 0h8L21 6.500v8L14.500 21h-8L0 14.500v-8z" fill="#cc0b0b" />
                <text x="10.500" y="14" fill="#fff" fontSize="9" fontWeight="700" textAnchor="middle" fontFamily="Open Sans">
                  ABP
                </text>
              </svg>
            </IconButton>
            <IconButton aria-label="Sidebars">
              <Line d="M3 2h14q2 0 2 2v12q0 2-2 2H3q-2 0-2-2V4q0-2 2-2zM9.500 2v16M4 6h2M4 9h2M4 12h1" w={2} />
            </IconButton>
            <MenuDivider />
            <IconButton aria-label="Menu">
              <Line d="M3 3.500h14M3 10h14M3 16.500h14" w={2.6} size={18} />
            </IconButton>
          </Extensions>
        </Toolbar>

        <Viewport>
          <Site>
            <SiteBody>
              <Sidebar>
                <Brand href="#">
                  <CakeLogo size={40} />
                  <BrandName>StatusCake</BrandName>
                  <Badge>6</Badge>
                </Brand>
                <SideLink href="#" $green>
                  <SideIcon>
                    <Glyph d={PERSON} box="0 128 1280 1536" w={14} h={16} />
                  </SideIcon>
                  Suggestion Board
                </SideLink>
                <Upgrade href="#">
                  <UpgradeTop>
                    <FaExclamationCircle size={16} />
                    UPGRADE NOW
                  </UpgradeTop>
                  <UpgradeNote>AND SAVE 15%</UpgradeNote>
                </Upgrade>
                {tests.map((item) => (
                  <SideEntry key={item.label} item={item} />
                ))}
                <SideHeading>ALERTING</SideHeading>
                {alerting.map((item) => (
                  <SideEntry key={item.label} item={item} />
                ))}
              </Sidebar>

              <Main>
                <Trial>
                  <TrialText>Free 7 Day Trial - No Credit Card Required</TrialText>
                  <TrialButton>Try Superior</TrialButton>
                  <TrialButton $gold>Try Business</TrialButton>
                </Trial>
                <PageHead>
                  <div>
                    <PageTitle>
                      Status Listing For <b>Moja applikacja</b>
                    </PageTitle>
                    <Summary>
                      Checking Every <b>900</b> seconds. <b>2</b> confirmation servers used, and Alert Delay Rate of{" "}
                      <b>0</b> minutes.
                    </Summary>
                  </div>
                  <HeadActions>
                    <GreenButton href="#">
                      <Glyph d={EXTERNAL} w={18} h={18} />
                      Open Site
                    </GreenButton>
                    <GreenButton href="#">
                      <Glyph d={EDIT} w={18} h={18} />
                      Edit Test
                    </GreenButton>
                  </HeadActions>
                </PageHead>

                <Content>
                  <Stats>
                    <Stat href="#" $color="#74b18c">
                      <Glyph d={CLOUD} box="0 256 1860 1280" w={60} h={44} />
                      <span>
                        <StatValue>100%</StatValue>
                        <StatLabel>24H Uptime</StatLabel>
                      </span>
                    </Stat>
                    <Stat href="#" $color="#738fb3">
                      <Glyph d={CLOCK} box="128 128 1536 1536" w={48} h={48} />
                      <span>
                        <StatValue>500</StatValue>
                        <StatLabel>Last Tested</StatLabel>
                      </span>
                    </Stat>
                    <Stat href="#" $color="#b172a9">
                      <Glyph d={PERSON_DISC} w={55} h={55} />
                      <span>
                        <StatValue>1 Active</StatValue>
                        <StatLabel>Contact Groups</StatLabel>
                      </span>
                    </Stat>
                  </Stats>

                  <Panels>
                    <Panel>
                      <PanelHead>
                        <Glyph d={BARS} box="0 128 2048 1536" w={20} h={15} />
                        <PanelTitle>7 DAY PERFORMANCES</PanelTitle>
                      </PanelHead>
                      <ChartBody>
                        <RangeRow>
                          Zoom
                          <RangeButtons>
                            {["1h", "12h", "1d", "1w", "1m", "All"].map((r) => (
                              <RangeButton key={r} $on={r === "All"}>
                                {r}
                              </RangeButton>
                            ))}
                          </RangeButtons>
                          <DateField>
                            From
                            <DateInput defaultValue="Apr 9, 2018" />
                          </DateField>
                          <DateField>
                            To
                            <DateInput defaultValue="May 9, 2018" />
                          </DateField>
                        </RangeRow>
                        <Chart />
                      </ChartBody>
                    </Panel>

                    <Panel>
                      <PanelHead>
                        <ListIcon />
                        <PanelTitle>UPTIME CHECKS</PanelTitle>
                        <Periods>
                          <Period>Weekly</Period>
                          <Period>Monthly</Period>
                          <Period>Daily</Period>
                        </Periods>
                      </PanelHead>
                      <ChecksTable>
                        <thead>
                          <tr>
                            <th scope="col">Date</th>
                            <th scope="col">
                              <SortHead>
                                Checks <SortArrows />
                              </SortHead>
                            </th>
                            <th scope="col">
                              <SortHead>
                                Uptime <SortArrows />
                              </SortHead>
                            </th>
                          </tr>
                        </thead>
                        <tbody>
                          {weeks.map(([week, checks]) => (
                            <tr key={week}>
                              <td>{week}</td>
                              <td>{checks}</td>
                              <td>
                                <Pill>100%</Pill>
                              </td>
                            </tr>
                          ))}
                        </tbody>
                      </ChecksTable>
                    </Panel>
                  </Panels>
                </Content>
              </Main>
            </SiteBody>

            <Survey>
              <Question>How likely are you to recommend StatusCake to a friend or co-worker?</Question>
              <Scores>
                <span>Not at all likely</span>
                {Array.from({ length: 11 }, (_, n) => (
                  <Score key={n}>{n}</Score>
                ))}
                <ScoreEnd>Extremely likely</ScoreEnd>
              </Scores>
              <Powered>
                powered by <a href="#">wootric</a>
              </Powered>
              <CloseSurvey aria-label="Close">X</CloseSurvey>
              <ChatButton aria-label="Open chat">
                <svg width="36" height="40" viewBox="0 0 36 40">
                  <path d="M3 0h30q3 0 3 3v36l-10-4H3q-3 0-3-3V3q0-3 3-3z" fill="#fff" />
                  <path d="M6 25q12 8 24 0" fill="none" stroke="#9b55b5" strokeWidth="2.500" strokeLinecap="round" />
                </svg>
              </ChatButton>
            </Survey>
          </Site>

          <Scroll>
            <ScrollArrow aria-label="Scroll up">
              <Line d="M3 14l7-7 7 7" size={12} w={3.4} />
            </ScrollArrow>
            <ScrollTrack>
              <ScrollThumb />
            </ScrollTrack>
            <ScrollArrow aria-label="Scroll down">
              <Line d="M3 6l7 7 7-7" size={12} w={3.4} />
            </ScrollArrow>
          </Scroll>
        </Viewport>

        <TaskBar>
          <TaskStart>
            <TaskButton aria-label="Start">
              <svg width="20" height="20" viewBox="0 0 20 20" fill="#fff">
                <path d="M0 3l8.500-1.200v7.700H0zM9.500 1.600L20 0v9.500H9.500zM0 10.500h8.500v7.700L0 17zM9.500 10.500H20V20L9.500 18.400z" />
              </svg>
            </TaskButton>
            <TaskButton aria-label="Search">
              <Line d="M12.500 1a6.500 6.500 0 1 0 .01 0zM8 12.500L1 19.500" w={1.4} />
            </TaskButton>
            <TaskButton aria-label="Task view">
              <svg width="24" height="17" viewBox="0 0 24 17" fill="none" stroke="#fff" strokeWidth="1.400">
                <path d="M5 1h14v15H5zM3 3H1v11h2M21 3h2v11h-2" />
              </svg>
            </TaskButton>
          </TaskStart>
          <TaskApps>
            <TaskButton aria-label="File Explorer" $open>
              <svg width="28" height="25" viewBox="0 0 28 25">
                <path d="M0 1q0-1 1-1h11l2 3h13v20H0z" fill="#ffe294" />
                <path d="M2 1.500h9v2H2z" fill="#e8a91e" />
                <path d="M5 25V14q0-2 2-2h14q2 0 2 2v11h-5v-7h-8v7z" fill="#35b3e8" />
              </svg>
            </TaskButton>
            <TaskButton aria-label="Writer" $open>
              <DocIcon color="#1a6ba0">
                <path d="M5 11h6M5 14h6M5 17h16M5 20h16M5 23h12" stroke="#1a6ba0" strokeWidth="1.500" />
                <path d="M12 10h9v5h-9z" fill="#1a6ba0" />
              </DocIcon>
            </TaskButton>
            <TaskButton aria-label="Calc">
              <DocIcon color="#2fa012">
                <path d="M5 11h14v12H5zM5 14h14M5 17h14M5 20h14M10 11v12M15 11v12" stroke="#43b02a" fill="none" />
                <path d="M13 19h7v7h-7z" fill="#fff" stroke="#bbb" />
                <path d="M15 22v3M18 20v5" stroke="#e8762c" strokeWidth="1.500" />
              </DocIcon>
            </TaskButton>
            <TaskButton aria-label="Impress">
              <DocIcon color="#a33e12">
                <path d="M4 12h17v2H4z" fill="#a33e12" />
                <path d="M6 15h13v8H6z" fill="#f7d9c8" stroke="#c65a2b" />
                <path d="M9 20a2 2 0 1 1 3 0M14 21v-4M16 21v-3" stroke="#c65a2b" fill="none" />
              </DocIcon>
            </TaskButton>
            <TaskButton aria-label="Acrobat Reader">
              <svg width="28" height="27" viewBox="0 0 28 27">
                <rect x="1" y="1" width="26" height="25" fill="#2d0a0a" stroke="#e2150b" strokeWidth="2" />
                <path d="M7 20q6-4 7-13 0-2-1 0 0 7 8 10 1-2-6-1-5 1-8 4z" fill="none" stroke="#fff" strokeWidth="1.400" />
              </svg>
            </TaskButton>
            <TaskButton aria-label="Winamp">
              <svg width="26" height="26" viewBox="0 0 26 26">
                <path d="M9 3h13l3 9-9 12H5L1 14z" fill="#e9e9e9" stroke="#111" />
                <path d="M22 0L2 14h7L4 26 24 10h-8z" fill="#f7931e" stroke="#222" />
                <path d="M19 3L6 13h6l-4 7" fill="none" stroke="#ffd56b" strokeWidth="1.500" />
              </svg>
            </TaskButton>
          </TaskApps>
          <TaskButton aria-label="Firefox" $active>
            <svg width="28" height="28" viewBox="0 0 28 28">
              <circle cx="14" cy="15" r="12.500" fill="#ff7a1a" />
              <path d="M17 0q9 5 10 14 0 8-7 12 4-6 3-12-2-4-5-7z" fill="#ffc928" />
              <path d="M2 10q0-5 3-8 1 3 3 4l4 1-3 6z" fill="#ff3d3a" />
              <circle cx="14" cy="14" r="7" fill="#2b4fbd" />
              <path d="M2 12q3-4 8-3 3 0 3 2l-3 2q-2 4 2 6 4 1 7-1-2 6-8 5-6 0-9-6z" fill="#ff9a1f" />
              <path d="M2 15q2 10 11 12 6 1 10-3-9 3-15-2-4-3-6-7z" fill="#ff2f5a" />
            </svg>
          </TaskButton>
          <Tray>
            <TrayIcons>
              <People>
                <Line d="M8 8a3.500 3.500 0 1 0-.01 0zM2 18q1-8 6-8 3 0 4 3M14 7a2.500 2.500 0 1 0-.01 0zM12 13q4-5 7 1" w={1.5} />
              </People>
              <Line d="M2 14l8-8 8 8" size={16} w={1.6} />
              <svg width="22" height="14" viewBox="0 0 22 14" aria-hidden="true">
                <path d="M5 3h15v9H5z" fill="#fff" stroke="#fff" />
                <path d="M20 5h2v5h-2zM0 2h6v5q-3 3-6 0z" fill="#fff" stroke="#001b30" />
              </svg>
              <svg width="18" height="17" viewBox="0 0 18 17" fill="none" stroke="#fff" aria-hidden="true">
                <path d="M1 14Q2 2 16 1.500" opacity=".5" strokeWidth="1.500" />
                <path d="M4.500 15Q5 6 16 5.500M8 16q0-6 8-6.500M11.500 16q0-3 4.500-3" strokeWidth="1.500" />
              </svg>
              <svg width="21" height="17" viewBox="0 0 21 17" fill="none" stroke="#fff" strokeWidth="1.300" aria-hidden="true">
                <path d="M1 6h3l5-5v15l-5-5H1zM12 6q2 2.500 0 5M14.500 4q3.500 4.500 0 9" />
                <path d="M17 2q5 6.500 0 13" opacity=".5" />
              </svg>
            </TrayIcons>
            <Clock>
              19:39
              <br />
              09.05.2018
            </Clock>
            <IconButton aria-label="Notifications">
              <svg width="20" height="20" viewBox="0 0 20 20" fill="none" stroke="#fff" strokeWidth="1.400" aria-hidden="true">
                <path d="M1 2h18v13h-6v4l-4-4H1z" />
              </svg>
            </IconButton>
            <ShowDesktop aria-label="Show desktop" />
          </Tray>
        </TaskBar>
      </Screen>
    </>
  );
}
